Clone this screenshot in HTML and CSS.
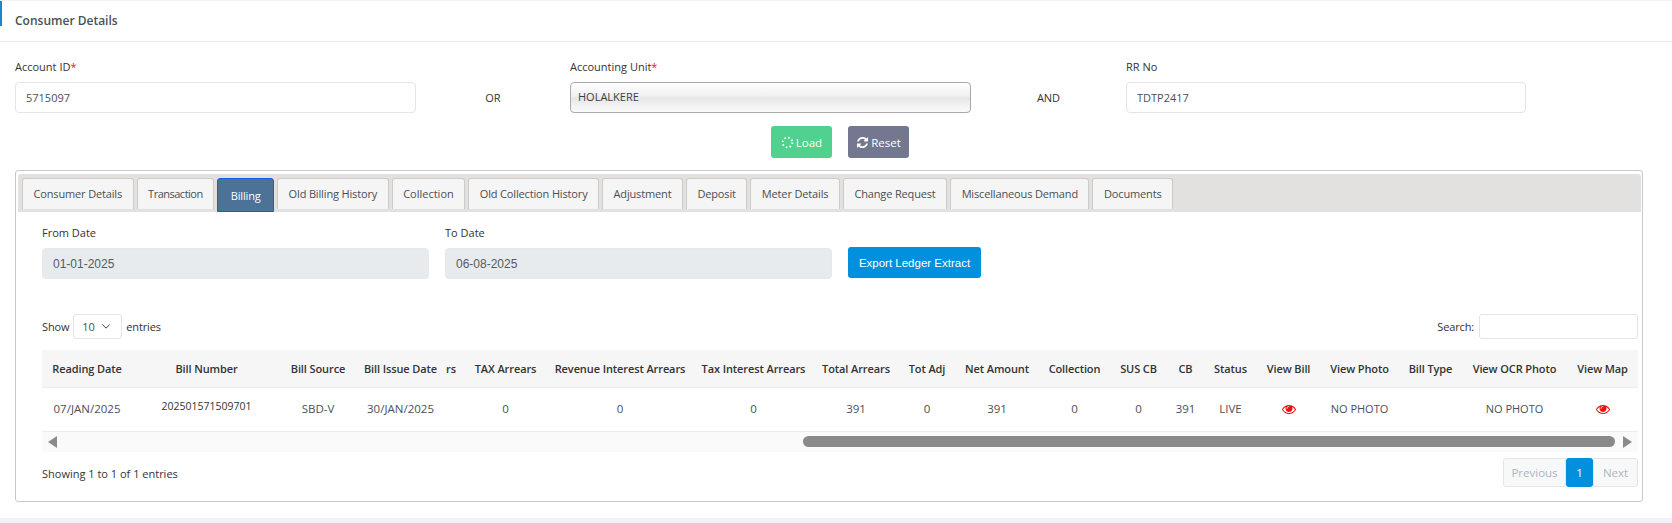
FILE: index.html
```html
<!DOCTYPE html>
<html lang="en">
<head>
<meta charset="utf-8">
<title>Consumer Details</title>
<link rel="stylesheet" href="styles.css">
</head>
<body>
<main class="card">
  <header class="card-header"><h1 class="card-title">Consumer Details</h1></header>
  <section class="lookup">
    <div class="field">
      <label class="field-label">Account ID<span class="req">*</span></label>
      <input class="control" type="text" value="5715097">
    </div>
    <div class="joiner">OR</div>
    <div class="field">
      <label class="field-label">Accounting Unit<span class="req">*</span></label>
      <input class="control control-glass" type="text" value="HOLALKERE">
    </div>
    <div class="joiner">AND</div>
    <div class="field">
      <label class="field-label">RR No</label>
      <input class="control" type="text" value="TDTP2417">
    </div>
  </section>
  <div class="actions">
    <button class="btn btn-load" type="button">
      <svg class="btn-icon" viewBox="0 0 16 16"><circle cx="8" cy="8" r="6" fill="none" stroke="#fff" stroke-width="2.400" stroke-dasharray="2 2.710"/></svg>Load
    </button>
    <button class="btn btn-reset" type="button">
      <svg class="btn-icon" viewBox="0 0 1792 1792"><path fill="#fff" d="M1639 1056q0 5-1 7-64 268-268 434.500t-478 166.500q-146 0-282.500-55t-243.500-157l-129 129q-19 19-45 19t-45-19-19-45v-448q0-26 19-45t45-19h448q26 0 45 19t19 45-19 45l-137 137q71 66 161 102t187 36q134 0 250-65t186-179q11-17 53-117 8-23 30-23h192q13 0 22.500 9.500t9.500 22.500zm25-800v448q0 26-19 45t-45 19h-448q-26 0-45-19t-19-45 19-45l138-138q-148-137-349-137-134 0-250 65t-186 179q-11 17-53 117-8 23-30 23h-199q-13 0-22.500-9.500t-9.500-22.500v-7q65-268 270-434.500t480-166.500q146 0 284 55.500t245 156.500l130-129q19-19 45-19t45 19 19 45z"/></svg>Reset
    </button>
  </div>

  <section class="panel">
    <nav class="tabs">
      <a class="tab">Consumer Details</a>
      <a class="tab tab-tight">Transaction</a>
      <a class="tab tab-active">Billing</a>
      <a class="tab">Old Billing History</a>
      <a class="tab tab-loose">Collection</a>
      <a class="tab">Old Collection History</a>
      <a class="tab">Adjustment</a>
      <a class="tab">Deposit</a>
      <a class="tab">Meter Details</a>
      <a class="tab">Change Request</a>
      <a class="tab">Miscellaneous Demand</a>
      <a class="tab">Documents</a>
    </nav>
    <div class="tab-body">
      <div class="dates">
        <div class="field">
          <label class="field-label">From Date</label>
          <input class="control control-date" type="text" value="01-01-2025" disabled>
        </div>
        <div class="field">
          <label class="field-label">To Date</label>
          <input class="control control-date" type="text" value="06-08-2025" disabled>
        </div>
        <button class="btn-export" type="button">Export Ledger Extract</button>
      </div>

      <div class="dt-top">
        <div class="dt-length">
          <span>Show</span>
          <div class="select-wrap">
            <select class="dt-select"><option>10</option><option>25</option></select>
            <svg class="chevron" viewBox="0 0 12 8"><path d="M1.500 1.500 6 6l4.500-4.500" fill="none" stroke="#444" stroke-width="1.200"/></svg>
          </div>
          <span>entries</span>
        </div>
        <div class="dt-search">
          <span>Search:</span>
          <input class="dt-search-input" type="text">
        </div>
      </div>

      <table class="grid">
        <colgroup>
          <col class="w90"><col class="w149"><col class="w74"><col class="w91"><col class="w19">
          <col class="w81"><col class="w148"><col class="w119"><col class="w86"><col class="w56">
          <col class="w84"><col class="w71"><col class="w57"><col class="w37"><col class="w53">
          <col class="w63"><col class="w79"><col class="w63"><col class="w105"><col class="w71">
        </colgroup>
        <thead>
          <tr>
            <th>Reading Date</th><th>Bill Number</th><th>Bill Source</th><th>Bill Issue Date</th><th class="clipped">rs</th>
            <th>TAX Arrears</th><th>Revenue Interest Arrears</th><th>Tax Interest Arrears</th><th>Total Arrears</th><th>Tot Adj</th>
            <th>Net Amount</th><th>Collection</th><th>SUS CB</th><th>CB</th><th>Status</th>
            <th>View Bill</th><th>View Photo</th><th>Bill Type</th><th>View OCR Photo</th><th>View Map</th>
          </tr>
        </thead>
        <tbody>
          <tr>
            <td>07/JAN/2025</td><td class="bill-no"><span>202501571509701</span></td><td>SBD-V</td><td>30/JAN/2025</td><td></td>
            <td>0</td><td>0</td><td>0</td><td>391</td><td>0</td>
            <td>391</td><td>0</td><td>0</td><td>391</td><td>LIVE</td>
            <td><svg class="eye" viewBox="0 0 1792 1792"><path d="M1664 960q-152-236-381-353 61 104 61 225 0 185-131.500 316.500t-316.500 131.500-316.500-131.500-131.500-316.500q0-121 61-225-229 117-381 353 133 205 333.500 326.500t434.500 121.500 434.500-121.500 333.500-326.500zm-720-384q0-20-14-34t-34-14q-125 0-214.500 89.500t-89.500 214.500q0 20 14 34t34 14 34-14 14-34q0-86 61-147t147-61q20 0 34-14t14-34zm848 384q0 34-20 69-140 230-376.500 368.500t-499.500 138.500-499.500-139-376.500-368q-20-35-20-69t20-69q140-229 376.500-368t499.500-139 499.500 139 376.500 368q20 35 20 69z"/></svg></td>
            <td class="no-photo">NO PHOTO</td><td></td><td class="no-photo">NO PHOTO</td>
            <td><svg class="eye" viewBox="0 0 1792 1792"><path d="M1664 960q-152-236-381-353 61 104 61 225 0 185-131.500 316.500t-316.500 131.500-316.500-131.500-131.500-316.500q0-121 61-225-229 117-381 353 133 205 333.500 326.500t434.500 121.500 434.500-121.500 333.500-326.500zm-720-384q0-20-14-34t-34-14q-125 0-214.500 89.500t-89.500 214.500q0 20 14 34t34 14 34-14 14-34q0-86 61-147t147-61q20 0 34-14t14-34zm848 384q0 34-20 69-140 230-376.500 368.500t-499.500 138.500-499.500-139-376.500-368q-20-35-20-69t20-69q140-229 376.500-368t499.500-139 499.500 139 376.500 368q20 35 20 69z"/></svg></td>
          </tr>
        </tbody>
      </table>
      <div class="hscroll">
        <span class="arrow arrow-left"></span>
        <span class="thumb"></span>
        <span class="arrow arrow-right"></span>
      </div>

      <div class="dt-bottom">
        <div class="dt-info">Showing 1 to 1 of 1 entries</div>
        <div class="pager">
          <a class="page page-off page-prev">Previous</a>
          <a class="page page-on">1</a>
          <a class="page page-off page-next">Next</a>
        </div>
      </div>
    </div>
  </section>
</main>
</body>
</html>
```

FILE: styles.css
```css
* { box-sizing: border-box; }
html, body { margin: 0; height: 100%; }
body {
  background: #f1f2f5;
  font-family: "Open Sans", "Noto Sans", sans-serif;
  font-size: 11px;
  color: #333;
  overflow: hidden;
}
.card { background: #fff; height: 518px; border-top: 1px solid #f4f4f4; }
.card-header { height: 41px; border-bottom: 1px solid #e9ebee; }
.card-title {
  margin: 0;
  height: 25px;
  border-left: 2px solid #1f86c6;
  padding-left: 13px;
  font-size: 12px;
  font-weight: 600;
  line-height: 40px;
  color: #4a5058;
}
.lookup {
  display: grid;
  grid-template-columns: 401px 154px 401px 155px 400px;
  padding: 17px 0 0 15px;
}
.field { display: flex; flex-direction: column; gap: 7px; }
.field-label { height: 16px; line-height: 16px; color: #333; }
.req { color: #f01030; }
.joiner { align-self: end; height: 31px; line-height: 31px; text-align: center; color: #333; }
.control {
  width: 100%;
  height: 31px;
  border: 1px solid #e1e4e8;
  border-radius: 4px;
  padding: 0 10px;
  font: inherit;
  color: #4a5058;
  background: #fff;
  outline: 0;
}
.control-glass {
  padding: 0 7px 2px;
  border-color: #a9a9a9;
  color: #3a3f45;
  background: linear-gradient(#fff 0, #f0f0f0 45%, #e6e6e6 52%, #f3f3f3 80%, #fafafa 100%);
}
.control-date {
  background: #e8ebee;
  font-family: "Liberation Sans", Arial, sans-serif;
  font-size: 12px;
  color: #555b62;
  opacity: 1;
  border-color: #e6e8eb;
}
.actions { display: flex; justify-content: center; gap: 16px; margin-top: 13px; padding-left: 8px; }
.btn {
  display: flex;
  align-items: center;
  justify-content: center;
  gap: 2px;
  width: 61px;
  height: 32px;
  border: 0;
  border-radius: 3px;
  font: inherit;
  font-size: 11.500px;
  color: #fff;
}
.btn-load { background: #50d18d; }
.btn-reset { background: #737890; }
.btn-icon { width: 13px; height: 13px; }

.panel {
  margin: 12px 29px 0 15px;
  height: 332px;
  border: 1px solid #c9c9c9;
  border-radius: 3px;
  padding: 3px 1px 0 2px;
}
.tabs {
  display: flex;
  gap: 3px;
  height: 38px;
  padding: 4px 0 0 4px;
  background: #e3e0e0;
  border-radius: 3px 3px 0 0;
  align-items: flex-start;
}
.tab {
  height: 31px;
  padding: 0 10.500px;
  border: 1px solid #cdcaca;
  border-bottom: 0;
  border-radius: 3px 3px 0 0;
  background: #f5f5f5;
  color: #4a4f55;
  line-height: 30px;
  letter-spacing: -0.150px;
  white-space: nowrap;
}
.tab-tight { letter-spacing: -0.500px; }
.tab-loose { letter-spacing: 0; }
.tab-active {
  height: 34px;
  padding: 0 12.500px;
  background: #4c7297;
  border: 1px solid #0f5fe6;
  color: #fff;
  line-height: 33px;
}
.tab-body { padding: 0 3px 0 24px; }
.dates {
  display: grid;
  grid-template-columns: 387px 387px 133px;
  gap: 16px;
  align-items: end;
  padding-top: 13px;
}
.btn-export {
  height: 31px;
  margin-bottom: 1px;
  border: 0;
  border-radius: 3px;
  background: #0090dd;
  color: #fff;
  font-family: "Liberation Sans", Arial, sans-serif;
  font-size: 11.500px;
}
.dt-top {
  display: flex;
  justify-content: space-between;
  align-items: center;
  margin-top: 35px;
  height: 25px;
}
.dt-length, .dt-search { display: flex; align-items: center; letter-spacing: -0.150px; }
.dt-length { gap: 4px; }
.dt-search { gap: 5px; }
.select-wrap { position: relative; width: 49px; height: 25px; }
.dt-select {
  appearance: none;
  width: 100%;
  height: 100%;
  padding: 0 0 0 8px;
  border: 1px solid #e1e4e8;
  border-radius: 3px;
  background: #fff;
  font: inherit;
  color: #4a5058;
}
.chevron { position: absolute; right: 11px; top: 9px; width: 10px; height: 7px; pointer-events: none; }
.dt-search-input { width: 159px; height: 25px; border: 1px solid #e1e4e8; border-radius: 3px; }

.grid {
  table-layout: fixed;
  width: 1596px;
  border-collapse: collapse;
  margin-top: 11px;
}
.w19 { width: 19px; } .w37 { width: 37px; } .w53 { width: 53px; } .w56 { width: 56px; }
.w57 { width: 57px; } .w63 { width: 63px; } .w71 { width: 71px; } .w74 { width: 74px; }
.w79 { width: 79px; } .w81 { width: 81px; } .w84 { width: 84px; } .w86 { width: 86px; }
.w90 { width: 90px; } .w91 { width: 91px; } .w105 { width: 105px; } .w119 { width: 119px; }
.w148 { width: 148px; } .w149 { width: 149px; }
.grid th, .grid td { padding: 0; text-align: center; white-space: nowrap; }
.grid th {
  height: 37px;
  background: #f6f6f6;
  border-bottom: 1px solid #ececec;
  font-weight: 600;
  letter-spacing: -0.100px;
  color: #333;
}
.grid th.clipped { text-align: left; }
.grid td { height: 44px; padding-bottom: 2px; border-bottom: 1px solid #ececec; color: #4a5058; font-size: 11.500px; }
.grid td.no-photo { font-size: 11px; }
.bill-no span { position: relative; top: -3px; color: #333; font-size: 10.500px; }
.eye { width: 14px; height: 14px; fill: #f01010; vertical-align: middle; }
.hscroll {
  display: flex;
  align-items: center;
  height: 20px;
  padding: 0 6px;
  background: #fafafa;
}
.arrow { width: 0; height: 0; border-top: 6px solid transparent; border-bottom: 6px solid transparent; }
.arrow-left { border-right: 9px solid #8a8a8a; }
.arrow-right { border-left: 9px solid #8a8a8a; }
.thumb { width: 812px; height: 11px; margin: 0 8px 0 auto; border-radius: 6px; background: #8a8a8a; }

.dt-bottom {
  display: flex;
  justify-content: space-between;
  align-items: center;
  margin-top: 6px;
  height: 29px;
}
.dt-info { padding-top: 3px; }
.pager { display: flex; height: 29px; }
.page { display: flex; align-items: center; justify-content: center; height: 29px; font-size: 11.500px; }
.page-off { background: #f7f8fa; border: 1px solid #e3e6ea; color: #adb5bd; }
.page-prev { width: 63px; border-radius: 3px 0 0 3px; }
.page-next { width: 45px; border-radius: 0 3px 3px 0; }
.page-on { width: 27px; background: #0090dd; color: #fff; border-radius: 3px; }
```
